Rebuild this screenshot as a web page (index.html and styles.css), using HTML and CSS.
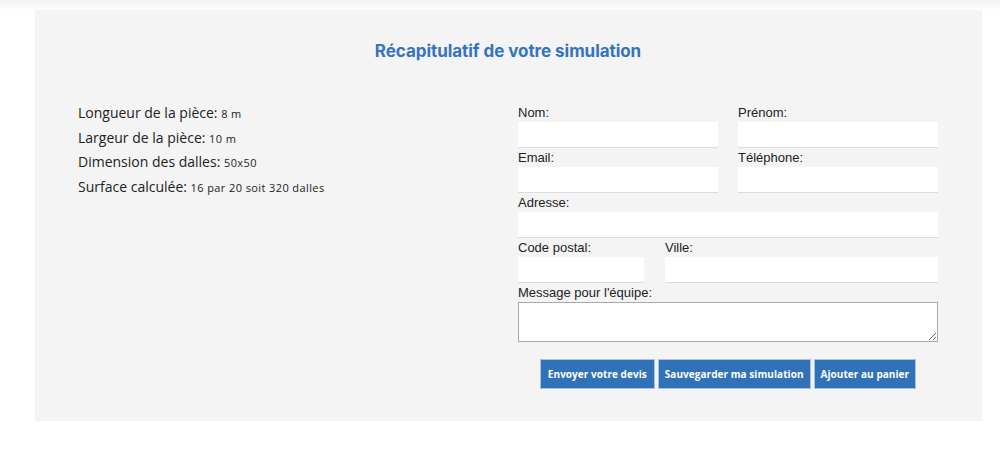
FILE: index.html
```html
<!DOCTYPE html>
<html lang="fr">
<head>
<meta charset="utf-8">
<title>Récapitulatif</title>
<link rel="stylesheet" href="styles.css">
</head>
<body>
<div class="topbar"></div>
<section class="panel">
  <h2 class="title">Récapitulatif de votre simulation</h2>
  <div class="columns">
    <ul class="summary">
      <li>Longueur de la pièce: <span class="val">8 m</span></li>
      <li>Largeur de la pièce: <span class="val">10 m</span></li>
      <li>Dimension des dalles: <span class="val">50x50</span></li>
      <li>Surface calculée: <span class="val">16 par 20 soit 320 dalles</span></li>
    </ul>
    <form class="form">
      <div class="row two">
        <div class="field"><label>Nom:</label><input type="text"></div>
        <div class="field"><label>Prénom:</label><input type="text"></div>
      </div>
      <div class="row two">
        <div class="field"><label>Email:</label><input type="text"></div>
        <div class="field"><label>Téléphone:</label><input type="text"></div>
      </div>
      <div class="row">
        <div class="field"><label>Adresse:</label><input type="text"></div>
      </div>
      <div class="row city">
        <div class="field"><label>Code postal:</label><input type="text"></div>
        <div class="field"><label>Ville:</label><input type="text"></div>
      </div>
      <div class="row">
        <div class="field"><label>Message pour l'équipe:</label><textarea></textarea></div>
      </div>
      <div class="actions">
        <button type="button" class="btn">Envoyer votre devis</button>
        <button type="button" class="btn">Sauvegarder ma simulation</button>
        <button type="button" class="btn">Ajouter au panier</button>
      </div>
    </form>
  </div>
</section>
</body>
</html>
```

FILE: styles.css
```css
* { box-sizing: border-box; }
html, body { margin: 0; padding: 0; background: #fff; }
body { font-family: "Liberation Sans", Arial, sans-serif; color: #222; }

.topbar {
  height: 10px;
  background: linear-gradient(#f2f2f2, #fcfcfc 80%, #fff);
}

.panel {
  margin: 0 18px 0 35px;
  background: #f4f4f4;
  padding: 0 44px 32px 43px;
}

.title {
  margin: 0;
  padding-top: 31px;
  height: 94px;
  text-align: center;
  font-family: Inter, "Liberation Sans", sans-serif;
  font-weight: 700;
  font-size: 17px;
  color: #3473bd;
  letter-spacing: -0.05px;
}

.columns {
  display: grid;
  grid-template-columns: 420px 420px;
  column-gap: 20px;
}

.summary {
  list-style: none;
  margin: 0;
  padding: 0;
  font-family: "Open Sans", sans-serif;
  font-size: 14px;
  color: #222;
}
.summary li {
  height: 24.5px;
  line-height: 18px;
}
.summary .val { font-size: 11px; letter-spacing: 0.4px; }

.form { display: flex; flex-direction: column; }
.row { display: flex; gap: 20px; margin-bottom: 2px; }
.row.two .field { flex: 0 0 200px; }
.row.city { gap: 21px; }
.row.city .field:first-child { flex: 0 0 126px; }
.row.city .field:last-child { flex: 1 1 0; }
.field { display: flex; flex-direction: column; flex: 1 1 0; min-width: 0; }
.field label {
  font-size: 13px;
  line-height: 18px;
  color: #222;
}
.field input {
  width: 100%;
  min-width: 0;
  height: 25px;
  border: none;
  background: #fff;
  box-shadow: 0 1px 0 #dcdcdc;
  margin: 0;
  padding: 0 4px;
  font: inherit;
}
.field textarea {
  width: 100%;
  height: 40px;
  border: 1px solid #a9a9a9;
  background: #fff;
  margin: 0;
  resize: vertical;
  font: inherit;
}

.actions {
  display: flex;
  justify-content: center;
  gap: 3px;
  margin-top: 15px;
}
.btn {
  height: 30px;
  padding: 0 6px;
  background: #3171b8;
  color: #fff;
  border: 1px solid #a9c3e2;
  font-family: "Open Sans", sans-serif;
  font-weight: 700;
  font-size: 10px;
  letter-spacing: 0.05px;
  cursor: pointer;
}
.btn:first-child { padding: 0 7px; }
```
